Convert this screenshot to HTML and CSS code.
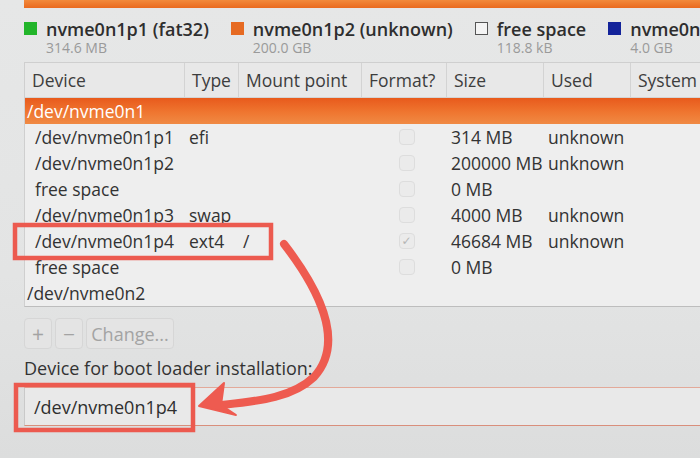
FILE: index.html
```html
<!DOCTYPE html>
<html>
<head>
<meta charset="utf-8">
<link rel="stylesheet" href="styles.css">
</head>
<body>
<div class="screen">
  <div class="diskbar"></div>
  <div class="legend">
    <div class="item"><span class="sq green"></span><div><div class="name">nvme0n1p1 (fat32)</div><div class="lsize">314.6 MB</div></div></div>
    <div class="item"><span class="sq orange"></span><div><div class="name">nvme0n1p2 (unknown)</div><div class="lsize">200.0 GB</div></div></div>
    <div class="item"><span class="sq free"></span><div><div class="name">free space</div><div class="lsize">118.8 kB</div></div></div>
    <div class="item last"><span class="sq blue"></span><div><div class="name">nvme0n</div><div class="lsize">4.0 GB</div></div></div>
  </div>
  <div class="table">
    <div class="row head">
      <div class="c dev">Device</div>
      <div class="c type">Type</div>
      <div class="c mnt">Mount point</div>
      <div class="c fmt">Format?</div>
      <div class="c size">Size</div>
      <div class="c used">Used</div>
      <div class="c sys">System</div>
    </div>
    <div class="row sel"><div class="c dev top">/dev/nvme0n1</div></div>
    <div class="row">
      <div class="c dev sub">/dev/nvme0n1p1</div><div class="c type">efi</div><div class="c mnt"></div>
      <div class="c fmt"><span class="cb"></span></div><div class="c size">314 MB</div><div class="c used">unknown</div>
    </div>
    <div class="row">
      <div class="c dev sub">/dev/nvme0n1p2</div><div class="c type"></div><div class="c mnt"></div>
      <div class="c fmt"><span class="cb"></span></div><div class="c size">200000 MB</div><div class="c used">unknown</div>
    </div>
    <div class="row">
      <div class="c dev sub">free space</div><div class="c type"></div><div class="c mnt"></div>
      <div class="c fmt"><span class="cb"></span></div><div class="c size">0 MB</div><div class="c used"></div>
    </div>
    <div class="row">
      <div class="c dev sub">/dev/nvme0n1p3</div><div class="c type">swap</div><div class="c mnt"></div>
      <div class="c fmt"><span class="cb"></span></div><div class="c size">4000 MB</div><div class="c used">unknown</div>
    </div>
    <div class="row">
      <div class="c dev sub">/dev/nvme0n1p4</div><div class="c type">ext4</div><div class="c mnt">/</div>
      <div class="c fmt"><span class="cb checked">&#10003;</span></div><div class="c size">46684 MB</div><div class="c used">unknown</div>
    </div>
    <div class="row">
      <div class="c dev sub">free space</div><div class="c type"></div><div class="c mnt"></div>
      <div class="c fmt"><span class="cb"></span></div><div class="c size">0 MB</div><div class="c used"></div>
    </div>
    <div class="row">
      <div class="c dev top">/dev/nvme0n2</div>
    </div>
  </div>
  <div class="buttons">
    <div class="btn sign">+</div>
    <div class="btn sign">&minus;</div>
    <div class="btn change">Change...</div>
  </div>
  <div class="label">Device for boot loader installation:</div>
  <div class="combo"><span>/dev/nvme0n1p4</span></div>

  <svg class="annot" width="700" height="458" viewBox="0 0 700 458">
    <rect x="15" y="225" width="256" height="33" fill="none" stroke="#ec5a4f" stroke-width="4.5"/>
    <rect x="16" y="385" width="177" height="45" fill="none" stroke="#ec5a4f" stroke-width="4.5"/>
    <path d="M284,244 C318,288 346,342 314,377 C292,398 258,401 222,405" fill="none" stroke="#ee5b50" stroke-width="8" stroke-linecap="round"/>
    <polygon points="199,406 224,383 221,405 236,415" fill="#ee5b50" stroke="#ee5b50" stroke-width="2" stroke-linejoin="round"/>
  </svg>
</div>
</body>
</html>
```
FILE: styles.css
```css
* { box-sizing: border-box; }
html, body {
  margin: 0;
  padding: 0;
  width: 700px;
  height: 458px;
  overflow: hidden;
}
body {
  background: linear-gradient(180deg, #e6e7e7 0%, #e3e4e4 60%, #dcdddd 100%);
  font-family: "Open Sans", "DejaVu Sans", sans-serif;
  color: #3a3a3a;
}
.screen {
  position: relative;
  width: 700px;
  height: 458px;
  overflow: hidden;
}
.diskbar {
  margin-left: 24px;
  height: 8px;
  background: linear-gradient(180deg, #f28a3c 0%, #ea6a1f 100%);
}
.legend {
  display: flex;
  gap: 22px;
  padding: 11px 0 0 24px;
  height: 54px;
  white-space: nowrap;
  overflow: hidden;
}
.item {
  display: flex;
  gap: 9px;
  align-items: flex-start;
  flex: none;
}
.sq {
  width: 13px;
  height: 13px;
  margin-top: 3px;
  flex: none;
}
.green { background: #22b52a; }
.orange { background: #e66a22; }
.free { background: #f4f4f4; border: 1px solid #555; }
.blue { background: #13239a; }
.name {
  font-size: 18px;
  font-weight: 600;
  line-height: 21px;
  color: #2e2e2e;
}
.lsize {
  font-size: 14px;
  line-height: 16px;
  color: #9a9a9a;
}
.table {
  margin-left: 24px;
  width: 676px;
  border-top: 1px solid #cfcfcf;
  border-left: 1px solid #cfcfcf;
  border-bottom: 1px solid #bdbdbd;
  background: #eeeeee;
  overflow: hidden;
}
.row {
  display: flex;
  height: 26px;
  align-items: center;
  font-size: 17.5px;
  color: #333;
  white-space: nowrap;
}
.row.head {
  height: 35px;
  background: #e8e8e8;
  border-bottom: 1px solid #d4d4d4;
  color: #3d3d3d;
}
.row.head .c {
  height: 100%;
  display: flex;
  align-items: center;
  justify-content: flex-start;
  padding-left: 7px;
  border-right: 1px solid #d3d3d3;
}
.row.sel {
  background: linear-gradient(180deg, #e85a1c 0%, #ef7630 55%, #f08a44 100%);
  color: #fff;
}
.c { flex: none; padding-left: 4px; }
.dev { width: 160px; }
.type { width: 54px; }
.mnt { width: 123px; }
.fmt { width: 85px; display: flex; justify-content: center; }
.size { width: 97px; }
.used { width: 87px; }
.sys { width: 80px; }
.dev.sub { padding-left: 10px; }
.dev.top { padding-left: 2px; width: 300px; }
.cb {
  width: 16px;
  height: 16px;
  border-radius: 4px;
  border: 1px solid #dddddd;
  background: #ebebeb;
  font-size: 12px;
  line-height: 14px;
  color: #b5b5b5;
  text-align: center;
}
.buttons {
  display: flex;
  gap: 3px;
  margin: 11px 0 0 24px;
}
.btn {
  height: 31px;
  border: 1px solid #d6d6d6;
  border-radius: 4px;
  background: #e4e4e4;
  color: #a3a3a3;
  display: flex;
  align-items: center;
  justify-content: center;
  font-size: 18px;
}
.btn.sign { width: 28px; font-size: 21px; }
.btn.change { width: 88px; }
.label {
  margin: 7px 0 0 24px;
  font-size: 18px;
  line-height: 24px;
  color: #333;
}
.combo {
  margin: 7px 0 0 24px;
  height: 39px;
  border-top: 1.5px solid #e3a999;
  border-bottom: 1.5px solid #d98f7c;
  border-left: 1px solid #c9c9c9;
  background: #e9e9e9;
  display: flex;
  align-items: center;
  padding-left: 9px;
  font-size: 18px;
  color: #2f2f2f;
}
.annot {
  position: absolute;
  left: 0;
  top: 0;
  pointer-events: none;
}
```
